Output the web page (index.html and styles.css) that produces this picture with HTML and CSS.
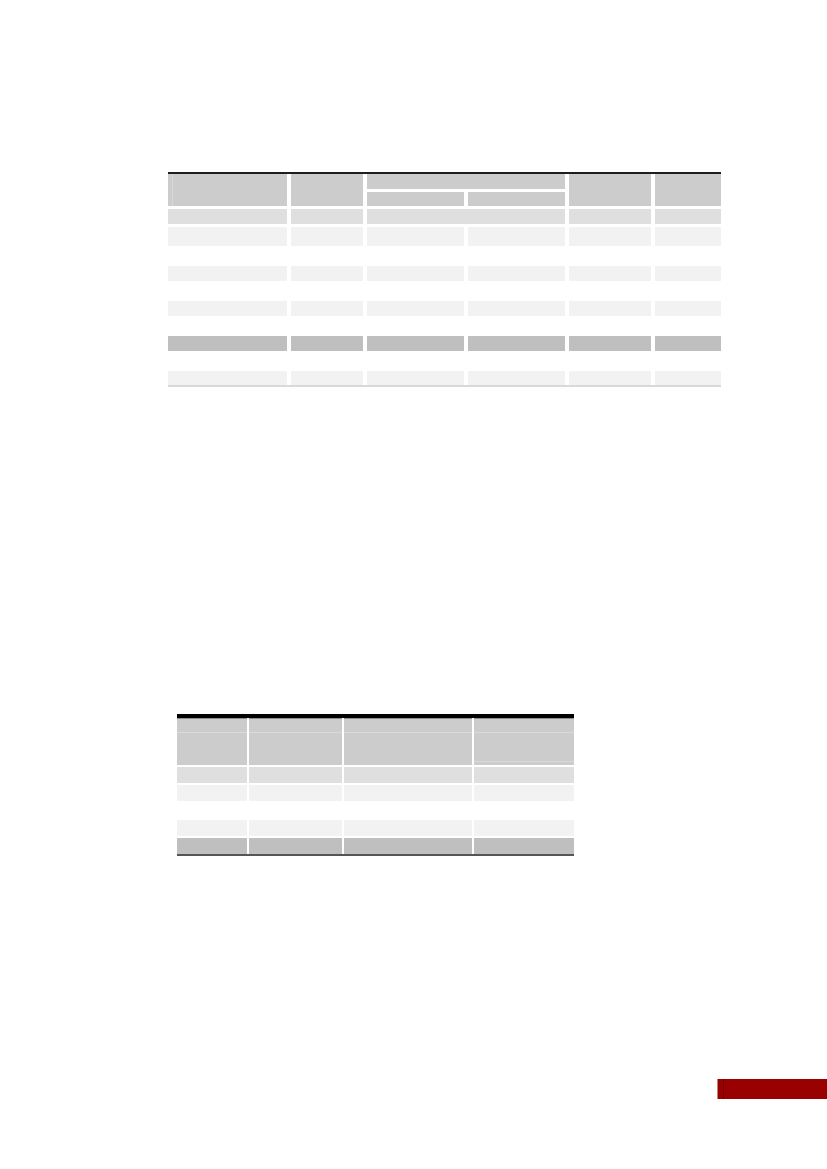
FILE: index.html
```html
<!DOCTYPE html>
<html lang="en">
<head>
<meta charset="utf-8">
<title>Tables</title>
<link rel="stylesheet" href="styles.css">
</head>
<body>
<div class="page">
  <section class="t1">
    <div class="t1-head">
      <div class="cell h c1 span2"></div>
      <div class="cell h c2 span2"></div>
      <div class="cell h group"></div>
      <div class="cell h sub-a"></div>
      <div class="cell h sub-b"></div>
      <div class="cell h c5 span2"></div>
      <div class="cell h c6 span2"></div>
    </div>
    <div class="t1-row r-mid merged">
      <div class="cell"></div><div class="cell"></div><div class="cell wide"></div><div class="cell"></div><div class="cell"></div>
    </div>
    <div class="t1-row r-light tall">
      <div class="cell"></div><div class="cell"></div><div class="cell"></div><div class="cell"></div><div class="cell"></div><div class="cell"></div>
    </div>
    <div class="t1-gap"></div>
    <div class="t1-row r-light">
      <div class="cell"></div><div class="cell"></div><div class="cell"></div><div class="cell"></div><div class="cell"></div><div class="cell"></div>
    </div>
    <div class="t1-gap"></div>
    <div class="t1-row r-light">
      <div class="cell"></div><div class="cell"></div><div class="cell"></div><div class="cell"></div><div class="cell"></div><div class="cell"></div>
    </div>
    <div class="t1-gap"></div>
    <div class="t1-row r-dark">
      <div class="cell"></div><div class="cell"></div><div class="cell"></div><div class="cell"></div><div class="cell"></div><div class="cell"></div>
    </div>
    <div class="t1-gap"></div>
    <div class="t1-row r-light last">
      <div class="cell"></div><div class="cell"></div><div class="cell"></div><div class="cell"></div><div class="cell"></div><div class="cell"></div>
    </div>
  </section>

  <section class="t2">
    <div class="t2-row t2-head">
      <div class="cell hl"></div><div class="cell hl"></div><div class="cell hl"></div><div class="cell hl box"></div>
    </div>
    <div class="t2-row r-mid">
      <div class="cell"></div><div class="cell"></div><div class="cell"></div><div class="cell"></div>
    </div>
    <div class="t2-row r-light">
      <div class="cell"></div><div class="cell"></div><div class="cell"></div><div class="cell"></div>
    </div>
    <div class="t2-gap"></div>
    <div class="t2-row r-light">
      <div class="cell"></div><div class="cell"></div><div class="cell"></div><div class="cell"></div>
    </div>
    <div class="t2-row r-dark">
      <div class="cell"></div><div class="cell"></div><div class="cell"></div><div class="cell"></div>
    </div>
  </section>

  <footer class="foot">
    <div class="badge"></div>
  </footer>
</div>
</body>
</html>
```

FILE: styles.css
```css
html, body {
  margin: 0;
  padding: 0;
  background: #ffffff;
  font-family: "Liberation Sans", Arial, sans-serif;
}

.page {
  width: 827px;
  height: 1169px;
  padding-top: 172px;
  box-sizing: border-box;
  display: flex;
  flex-direction: column;
}

/* ---------- Table 1 ---------- */
.t1 {
  margin-left: 168px;
  width: 553px;
  border-top: 2px solid #1e1e1e;
  border-bottom: 2px solid #d9d9d9;
  display: flex;
  flex-direction: column;
}

.t1-head,
.t1-row {
  display: grid;
  grid-template-columns: 119px 72px 97px 97px 82px 66px;
  column-gap: 4px;
}

.t1-head {
  grid-template-rows: 15px 14px;
  row-gap: 3px;
}

.cell { min-width: 0; }

.h { background: #cccccc; }
.span2 { grid-row: 1 / 3; }
.t1-head .c1 { grid-column: 1; }
.t1-head .c2 { grid-column: 2; }
.t1-head .group { grid-column: 3 / 5; grid-row: 1; }
.t1-head .sub-a { grid-column: 3; grid-row: 2; }
.t1-head .sub-b { grid-column: 4; grid-row: 2; }
.t1-head .c5 { grid-column: 5; }
.t1-head .c6 { grid-column: 6; }

.t1-head .c1 {
  background: linear-gradient(to right, #cccccc 4px, #d8d8d8 4px, #d8d8d8 5px, #cccccc 5px);
}

.t1-row {
  height: 15px;
  margin-top: 3px;
}
.t1-row.tall { height: 19px; }
.t1-row.last { height: 14px; margin-top: 0; }
.t1-gap + .t1-row { margin-top: 0; }
.t1-row.merged .wide { grid-column: span 2; }

.t1-gap { height: 20px; }

.r-mid .cell { background: #dfdfdf; }
.r-light .cell { background: #f2f2f2; }
.r-dark .cell { background: #bfbfbf; }

/* ---------- Table 2 ---------- */
.t2 {
  margin-top: 327px;
  margin-left: 177px;
  width: 397px;
  border-top: 4px solid #000000;
  border-bottom: 2px solid #555555;
  display: flex;
  flex-direction: column;
  row-gap: 2px;
}

.t2-row {
  display: grid;
  grid-template-columns: 70px 93px 128px 100px;
  column-gap: 2px;
  height: 16px;
}

.t2-head {
  height: 47px;
}

.t2-head .hl {
  background:
    linear-gradient(to bottom, #8c8c8c 0, #8c8c8c 1px, transparent 1px),
    linear-gradient(to bottom, transparent 14px, #dadada 14px, #dadada 15px, transparent 15px),
    #cccccc;
}

.t2-head .box {
  background:
    linear-gradient(to bottom, #8c8c8c 0, #8c8c8c 1px, transparent 1px),
    linear-gradient(to bottom, transparent 43px, #dadada 43px, #dadada 44px, transparent 44px),
    linear-gradient(to bottom, transparent 14px, #dadada 14px, #dadada 15px, transparent 15px),
    #cccccc;
}

.t2-gap { height: 15px; }

.t2 .r-dark { margin-top: 0; }

/* ---------- Footer badge ---------- */
.foot {
  margin-top: 223px;
  display: flex;
  justify-content: flex-end;
}

.badge {
  width: 110px;
  height: 20px;
  background: #990000;
  border-left: 1px solid #c48080;
  box-sizing: border-box;
  background-image: linear-gradient(to right, transparent 5px, #6e0000 5px, #6e0000 6px, transparent 6px);
}
```
